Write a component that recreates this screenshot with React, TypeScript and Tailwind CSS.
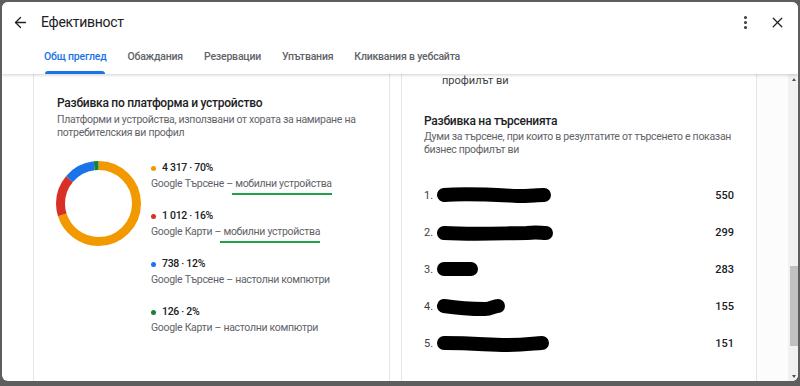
import React from 'react';
import { ArrowLeft, EllipsisVertical, X } from 'lucide-react';

type Segment = { value: number; color: string };

const segments: Segment[] = [
  { value: 70, color: '#f29900' },
  { value: 16, color: '#d93025' },
  { value: 12, color: '#1a73e8' },
  { value: 2, color: '#188038' },
];

const legend = [
  { dot: 'bg-[#f29900]', value: '4 317 · 70%', source: 'Google Търсене', device: 'мобилни устройства', mark: true },
  { dot: 'bg-[#d93025]', value: '1 012 · 16%', source: 'Google Карти', device: 'мобилни устройства', mark: true },
  { dot: 'bg-[#1a73e8]', value: '738 · 12%', source: 'Google Търсене', device: 'настолни компютри', mark: false },
  { dot: 'bg-[#188038]', value: '126 · 2%', source: 'Google Карти', device: 'настолни компютри', mark: false },
];

// redacted search terms, drawn as marker strokes
const queries = [
  { width: 114, d: 'M7 8 C30 6 60 8 80 9 C92 9 100 8 107 8', value: '550' },
  { width: 116, d: 'M7 9 C40 11 70 9 90 9 C100 8 104 9 109 9', value: '299' },
  { width: 41, d: 'M7 8 L34 8', value: '283' },
  { width: 68, d: 'M7 8 C20 10 38 11 48 11 C54 11 57 8 61 8', value: '155' },
  { width: 112, d: 'M7 8 C40 8 50 10 70 10 C90 10 98 8 105 8', value: '151' },
];

const tabs = ['Общ преглед', 'Обаждания', 'Резервации', 'Упътвания', 'Кликвания в уебсайта'];

const Donut = () => {
  const r = 38;
  const c = 2 * Math.PI * r;
  let offset = 0;
  return (
    <svg width="85" height="85" viewBox="0 0 85 85" className="shrink-0">
      <g transform="rotate(-90 42.5 42.5)">
        {segments.map(s => {
          const len = (s.value / 100) * c;
          const el = (
            <circle
              key={s.color}
              cx="42.5"
              cy="42.5"
              r={r}
              fill="none"
              stroke={s.color}
              strokeWidth="9"
              strokeDasharray={`${len} ${c - len}`}
              strokeDashoffset={-offset}
            />
          );
          offset += len;
          return el;
        })}
      </g>
    </svg>
  );
};

export default function App() {
  return (
    <div className="h-[386px] w-[800px] overflow-hidden bg-[#5e5e5e] px-[2px] pt-[2px] font-['Roboto',sans-serif]">
      <div className="flex h-[379px] flex-col overflow-hidden rounded-[6px] bg-white">
        {/* header */}
        <div className="relative z-10 h-[72px] shrink-0 bg-white shadow-[0_1px_3px_rgba(60,64,67,0.25)]">
          <div className="flex h-[40px] items-center pl-[10px] pr-[12px]">
            <ArrowLeft size={17} strokeWidth={1.8} className="text-[#202124]" />
            <span className="ml-[12px] text-[14px] tracking-[-0.3px] text-[#202124]">Ефективност</span>
            <div className="ml-auto flex items-center gap-[15px]">
              <EllipsisVertical size={17} strokeWidth={2.4} className="text-[#3c4043]" />
              <X size={17} strokeWidth={1.8} className="text-[#202124]" />
            </div>
          </div>
          <div className="flex h-[32px] gap-[21px] pl-[42px]">
            {tabs.map((t, i) => (
              <div key={t} className="relative flex items-center pb-[3px]">
                <span
                  className={
                    i === 0
                      ? 'text-[10.5px] font-medium tracking-[-0.2px] text-[#1a73e8]'
                      : 'text-[10.5px] font-medium tracking-[-0.2px] text-[#5f6368]'
                  }
                >
                  {t}
                </span>
                {i === 0 && (
                  <span className="absolute bottom-0 left-[1px] right-[1px] h-[3px] rounded-t-[3px] bg-[#1a73e8]" />
                )}
              </div>
            ))}
          </div>
        </div>

        {/* body */}
        <div className="flex min-h-0 flex-1">
          <div className="w-[31px] shrink-0" />

          <div className="w-[357px] shrink-0 border-x border-[#e3e5e8] pl-[23px] pt-[21px]">
            <h2 className="text-[12px] font-medium leading-[16px] tracking-[-0.25px] text-[#202124]">
              Разбивка по платформа и устройство
            </h2>
            <p className="mt-[2px] pr-[30px] text-[10.5px] leading-[13px] tracking-[-0.3px] text-[#5f6368]">
              Платформи и устройства, използвани от хората за намиране на потребителския ви профил
            </p>
            <div className="mt-[21px] flex items-start">
              <div className="-ml-[1px] mt-[1px]">
                <Donut />
              </div>
              <div className="ml-[10px] flex flex-col">
                {legend.map(item => (
                  <div key={item.value} className="mb-[16px]">
                    <div className="flex h-[16px] items-center">
                      <span className={`h-[5px] w-[5px] rounded-full ${item.dot}`} />
                      <span className="ml-[6px] text-[10.5px] font-medium tracking-[-0.3px] text-[#202124]">
                        {item.value}
                      </span>
                    </div>
                    <div className="flex h-[16px] items-center text-[10.5px] tracking-[-0.3px] text-[#5f6368]">
                      <span>
                        {item.source} –{' '}
                        <span className="relative">
                          {item.device}
                          {item.mark && (
                            <span className="absolute -bottom-[5px] -left-[3px] right-0 h-[2px] bg-[#1fa348]" />
                          )}
                        </span>
                      </span>
                    </div>
                  </div>
                ))}
              </div>
            </div>
          </div>

          <div className="w-[11px] shrink-0" />

          <div className="w-[356px] shrink-0 border-x border-[#e3e5e8]">
            <p className="pl-[40px] text-[11px] leading-[14px] text-[#3c4043]">профилът ви</p>
            <div className="pl-[22px] pr-[22px] pt-[25px]">
              <h2 className="text-[12px] font-medium leading-[16px] tracking-[-0.25px] text-[#202124]">
                Разбивка на търсенията
              </h2>
              <p className="mt-[1px] text-[10.5px] leading-[13px] tracking-[-0.3px] text-[#5f6368]">
                Думи за търсене, при които в резултатите от търсенето е показан бизнес профилът ви
              </p>
              <div className="mt-[31px] flex flex-col gap-[19px]">
                {queries.map((q, i) => (
                  <div key={q.value} className="flex h-[18px] items-center">
                    <span className="w-[14px] text-[11px] text-[#3c4043]">{i + 1}.</span>
                    <svg width={q.width} height="18" viewBox={`0 0 ${q.width} 18`} className="-ml-[1px]">
                      <path
                        d={q.d}
                        fill="none"
                        stroke="#000"
                        strokeWidth="14"
                        strokeLinecap="round"
                        strokeLinejoin="round"
                      />
                    </svg>
                    <span className="ml-auto text-[11px] font-medium text-[#202124]">{q.value}</span>
                  </div>
                ))}
              </div>
            </div>
          </div>

          <div className="w-[31px] shrink-0 bg-[#fcfcfc]" />

          {/* scrollbar */}
          <div className="flex w-[11px] shrink-0 flex-col bg-[#f1f1f1]">
            <div className="flex h-[10px] items-center justify-center">
              <span className="h-0 w-0 border-x-[2.5px] border-b-[3px] border-x-transparent border-b-[#505050]" />
            </div>
            <div className="flex-1 pt-[182px] pb-[24px]">
              <div className="mx-auto h-[80px] w-[8px] bg-[#c1c1c1]" />
            </div>
            <div className="flex h-[10px] items-center justify-center">
              <span className="h-0 w-0 border-x-[2.5px] border-t-[3px] border-x-transparent border-t-[#505050]" />
            </div>
          </div>
        </div>
      </div>
    </div>
  );
}
